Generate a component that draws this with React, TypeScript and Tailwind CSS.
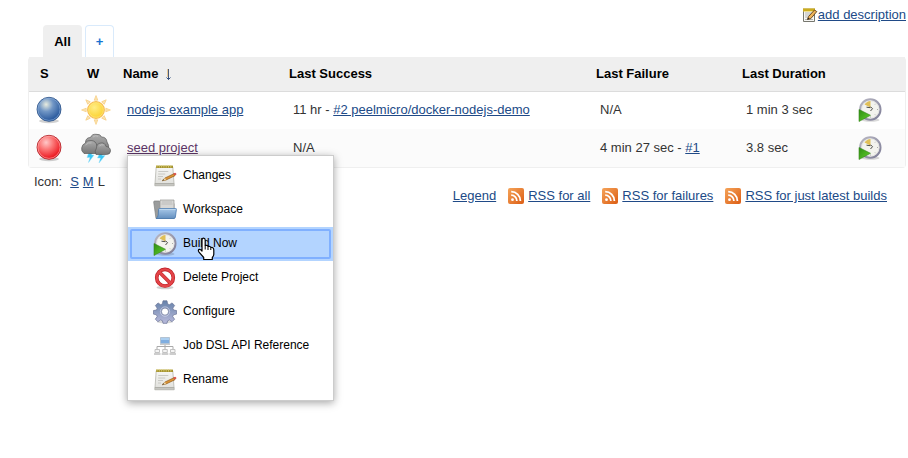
import type { ReactNode } from "react";

const link = "text-[#204a87] underline";

function Notepad() {
  return (
    <svg viewBox="0 0 24 24" className="size-6" aria-hidden="true">
      <defs>
        <linearGradient id="paper" x1="0" y1="0" x2="0" y2="1">
          <stop offset="0" stopColor="#f6f6f4" />
          <stop offset="1" stopColor="#e2e2de" />
        </linearGradient>
      </defs>
      <path d="M3.2 3h16.600l1.200 16.500H2z" fill="url(#paper)" stroke="#b5b5ae" strokeWidth=".8" />
      <path d="M1.800 19.500h19.400v2.300H1.800z" fill="#c6c6c1" stroke="#a2a29c" strokeWidth=".6" />
      <path d="M3 1.600h17v2.400H3z" fill="#a3922e" />
      <path d="M4 1v2.600M6.300 1v2.600M8.600 1v2.600M10.900 1v2.600M13.200 1v2.600M15.500 1v2.600M17.800 1v2.600" stroke="#ddd07a" strokeWidth=".8" />
      <path d="M5.300 7.500h10M5.200 10h7M5 12.500h5M5 15h3" stroke="#c4c4c0" strokeWidth=".9" />
      <path d="M9 16.800l3-2.800 9-4.300 1 2-9 4.300z" fill="#dd9436" stroke="#8f5a17" strokeWidth=".7" />
      <path d="M20.200 9.600l2-.8q1.400.6 1.200 1.800l-1.700 1z" fill="#d8524c" />
      <path d="M9 16.800l3-2.800 1 2z" fill="#f0d8a6" />
      <path d="M9 16.800l1.800-1.500.4 1z" fill="#333" />
    </svg>
  );
}

function EditNote() {
  return (
    <svg viewBox="0 0 16 16" className="size-4" aria-hidden="true">
      <path d="M1.5 2.5h11V14.5h-11z" fill="#f7f7f4" stroke="#77776f" />
      <path d="M1 1.500h12v3H1z" fill="#e7c62c" />
      <path d="M2 1v3M4 1v3M6 1v3M8 1v3M10 1v3M12 1v3" stroke="#9a7b0c" strokeWidth=".7" />
      <path d="M3 6h7M3 8h5M3 10h3M3 12.5h8" stroke="#aaa" strokeWidth=".9" />
      <path d="M5.5 12.5l1-3L12.5 3l2.3 1.600-6 7z" fill="#efb45a" stroke="#5c3a12" strokeWidth=".9" />
      <path d="M5.5 12.5l.6-1.8 1.5 1z" fill="#222" />
    </svg>
  );
}

function Clock() {
  return (
    <svg viewBox="0 0 24 24" className="size-6" aria-hidden="true">
      <defs>
        <linearGradient id="clockRim" x1="0" y1="0" x2="1" y2="1">
          <stop offset="0" stopColor="#b9b8c4" />
          <stop offset="1" stopColor="#7d7c96" />
        </linearGradient>
        <linearGradient id="play" x1="0" y1="0" x2="1" y2="1">
          <stop offset="0" stopColor="#2f8d14" />
          <stop offset="1" stopColor="#62d32c" />
        </linearGradient>
      </defs>
      <ellipse cx="12.5" cy="22" rx="9" ry="1.8" fill="#000" opacity=".15" />
      <circle cx="12.3" cy="11.5" r="10.2" fill="#f3f3ee" stroke="url(#clockRim)" strokeWidth="2" />
      <circle cx="12.3" cy="11.5" r="8.7" fill="none" stroke="#d4d4d4" strokeWidth=".5" />
      <path d="M12.5 9.500L6.5 6.500Q9 3 12.500 3z" fill="#e0bf58" />
      <path d="M8.500 9.200l4 .5M12.500 8.700l2 2-2 2.300" fill="none" stroke="#3a3a36" strokeWidth=".9" />
      <path d="M19 11.500h1M17 6.500l.7-.7M17 16.500l.7.7M12.5 18.5v1" stroke="#999" strokeWidth=".8" />
      <path d="M1 11.500v12l11.500-6.200z" fill="url(#play)" stroke="#35841c" strokeWidth=".6" />
    </svg>
  );
}

function Ball({ kind }: { kind: "blue" | "red" }) {
  const blue = kind === "blue";
  return (
    <svg viewBox="0 0 28 28" className="size-7" role="img" aria-label={blue ? "Success" : "Failed"}>
      <defs>
        <radialGradient id={`ball-${kind}`} cx=".38" cy=".3" r=".65">
          <stop offset="0" stopColor={blue ? "#e8ecdf" : "#ffc8c8"} />
          <stop offset=".45" stopColor={blue ? "#7196c5" : "#fb7777"} />
          <stop offset="1" stopColor={blue ? "#2d5c9f" : "#ed1c24"} />
        </radialGradient>
      </defs>
      <ellipse cx="14" cy="25" rx="10" ry="2.200" fill="#000" opacity=".18" />
      <circle cx="14" cy="13.300" r="12" fill={`url(#ball-${kind})`} stroke={blue ? "#284e83" : "#a71920"} strokeWidth=".8" />
      <circle cx="14" cy="13.300" r="11.100" fill="none" stroke={blue ? "#8badd9" : "#ffadad"} strokeWidth=".8" opacity=".8" />
    </svg>
  );
}

function Sun() {
  return (
    <svg viewBox="0 0 30 30" className="size-[30px]" role="img" aria-label="Sunny">
      <defs>
        <radialGradient id="sun" cx=".4" cy=".35" r=".65">
          <stop offset="0" stopColor="#ffed86" />
          <stop offset="1" stopColor="#fbd22e" />
        </radialGradient>
      </defs>
      {[0, 45, 90, 135, 180, 225, 270, 315].map((a) => (
        <path key={a} d="M13.2 5.2L15 .6l1.800 4.600z" transform={`rotate(${a} 15 15)`} fill="#fce3b0" stroke="#f6cf86" strokeWidth=".8" />
      ))}
      <circle cx="15" cy="15" r="8.3" fill="url(#sun)" stroke="#f6bd52" strokeWidth="1.2" />
      <circle cx="15" cy="15" r="7.3" fill="none" stroke="#ffe78a" strokeWidth=".6" />
    </svg>
  );
}

function Storm() {
  return (
    <svg viewBox="0 0 30 30" className="size-[30px]" role="img" aria-label="Storm">
      <defs>
        <linearGradient id="cloud" x1="0" y1="0" x2="0" y2="1">
          <stop offset="0" stopColor="#adadad" />
          <stop offset="1" stopColor="#767676" />
        </linearGradient>
      </defs>
      <path d="M8 19L6 24.500h3l-1.500 5 5.500-7.500h-2.500l2-3.500zM19 19.500L16.500 25h3L18 30l6-7.500h-3l2-3z" fill="#39c5f4" stroke="#8fdff9" strokeWidth=".5" />
      <g fill="url(#cloud)" stroke="#5a5a5a" strokeWidth=".7">
        <path d="M5 17Q4 13 4.500 9 5 4.500 9.500 4.500 11 .8 15 1.300 19.500.8 20.500 4q5 0 5.500 5 2.500 3 1.500 8L20 19z" />
        <path d="M3 20.500Q-.2 18 .8 14.500 1.500 11 4 10.500 5.500 7 10 7.500q5 .2 6 5.500 3 4 .5 7.500z" />
        <path d="M15 21.500q-2-3.500 .5-6.500 0-4.500 4.500-5 4-.5 5 3.500 4.500.5 4.500 4.500-.2 3.500-4 3.500z" />
      </g>
      <path d="M12 4q2.500-2 5-.7M4.500 12q3-3 6-2M18.500 13q2-2 4-1" fill="none" stroke="#ccc" strokeWidth=".8" opacity=".7" />
    </svg>
  );
}

function Folder() {
  return (
    <svg viewBox="0 0 24 24" className="size-6" aria-hidden="true">
      <defs>
        <linearGradient id="folder" x1="0" y1="0" x2="0" y2="1">
          <stop offset="0" stopColor="#a9c9e9" />
          <stop offset="1" stopColor="#638fbf" />
        </linearGradient>
      </defs>
      <path d="M.7 4q0-1 1-1H6l1 1h13l1 2v14.500H3z" fill="#9a9c9c" stroke="#7d7f7f" strokeWidth=".7" />
      <path d="M7 2h14v12H7z" fill="#d7d7d5" stroke="#969694" strokeWidth=".7" />
      <path d="M9 4h10M8.5 6h11" stroke="#b3b3b1" strokeWidth=".7" />
      <path d="M3 20.5q2-1 2.2-3.5l.4-5.500q.1-1 1-1h16q1 0 .8 1L22.400 19q-.2 1.500-1.500 1.500z" fill="url(#folder)" stroke="#4779af" strokeWidth=".8" />
      <path d="M6.5 11.400h16" stroke="#d0e5f7" strokeWidth=".7" />
    </svg>
  );
}

function Forbidden() {
  return (
    <svg viewBox="0 0 24 24" className="size-6" aria-hidden="true">
      <ellipse cx="12" cy="21.5" rx="8.5" ry="1.7" fill="#000" opacity=".18" />
      <circle cx="12" cy="11.7" r="8.3" fill="#fff" stroke="#b91e24" strokeWidth="3.6" />
      <path d="M6.500 6.200l11 11" stroke="#b91e24" strokeWidth="3.6" />
      <circle cx="12" cy="11.7" r="8.3" fill="none" stroke="#e44448" strokeWidth="2.4" />
      <path d="M6.500 6.200l11 11" stroke="#e44448" strokeWidth="2.4" />
    </svg>
  );
}

function Gear() {
  return (
    <svg viewBox="0 0 24 24" className="size-6" aria-hidden="true">
      <defs>
        <linearGradient id="gear" x1="0" y1="0" x2="0" y2="1">
          <stop offset="0" stopColor="#6682aa" />
          <stop offset="1" stopColor="#b9badb" />
        </linearGradient>
      </defs>
      <ellipse cx="12" cy="22" rx="8" ry="1.5" fill="#000" opacity=".15" />
      <path
        d="M10 .8h4l.6 3.100 1.800.8 2.700-1.800 2.500 2.600-1.800 2.700.8 1.800 3 .6v3.500l-3.100.7-.8 1.800 1.900 2.600-2.500 2.500-2.700-1.700-1.800.8-.6 2.500h-4l-.6-2.600-1.800-.7-2.700 1.700-2.600-2.500 1.900-2.700-.8-1.700-3-.7v-3.500l3.100-.6.7-1.800-1.800-2.700L5 2.900l2.700 1.800 1.700-.8zM12 8a3.600 3.600 0 1 0 0 7.200A3.600 3.600 0 0 0 12 8z"
        fill="url(#gear)"
        fillRule="evenodd"
        stroke="#687397"
        strokeWidth=".7"
      />
      <circle cx="12" cy="11.600" r="4.700" fill="none" stroke="#d2d5ea" strokeWidth=".7" />
    </svg>
  );
}

function Tree() {
  return (
    <svg viewBox="0 0 24 24" className="size-6" aria-hidden="true">
      <path d="M12 10v6M4 16v-3.500h16V16" fill="none" stroke="#aaa" />
      <path d="M7.500 3.500h9v6h-9z" fill="#80aee0" stroke="#b3c3d3" />
      <path d="M8 4h8v2H8z" fill="#abcff1" />
      <path d="M7 10.500h10" stroke="#cacaca" />
      <path d="M2 15.500h4.500v3H2zM9.700 15.500h4.600v3H9.700zM17.500 15.500H22v3h-4.500z" fill="#f4f4f4" stroke="#b5b5b5" strokeWidth=".8" />
      <path d="M1 20h6.500M8.700 20h6.600M16.500 20H23" stroke="#bdbdbd" strokeWidth="1.300" />
    </svg>
  );
}

function Rss() {
  return (
    <svg viewBox="0 0 16 16" className="size-4" aria-hidden="true">
      <defs>
        <linearGradient id="rss" x1="0" y1="0" x2="1" y2="1">
          <stop offset="0" stopColor="#f5a45a" />
          <stop offset="1" stopColor="#dc5d14" />
        </linearGradient>
      </defs>
      <rect width="16" height="16" rx="2" fill="url(#rss)" />
      <circle cx="4.500" cy="11.700" r="1.400" fill="#fff" />
      <path d="M3.200 7.200a5.700 5.700 0 0 1 5.700 5.700M3.200 3.700a9.200 9.200 0 0 1 9.200 9.200" fill="none" stroke="#fff" strokeWidth="1.800" />
    </svg>
  );
}

function SortArrow() {
  return (
    <svg viewBox="0 0 8 12" className="inline-block h-3 w-2" role="img" aria-label="Sorted descending">
      <path d="M4.500 1v10.500M2.500 9.500l2 2 2-2" fill="none" stroke="#35507f" strokeWidth="1" />
      <path d="M3.700 1v8" stroke="#e0a955" strokeWidth=".7" />
    </svg>
  );
}

function Pointer() {
  return (
    <svg viewBox="0 0 18 24" className="pointer-events-none absolute top-2.5 left-[69px] h-6 w-[18px]" aria-hidden="true">
      <path
        d="M5 14V3.200Q5 1.200 6.600 1.200T8.200 3.200V8.500Q11 8 11 9.500 13.500 9 13.800 10.500 16.700 10 16.800 13v4q0 2-1.500 3.500V22.500H6.700V20.500L1.800 14.800Q.8 13 2.200 12.400 3.500 12.200 5 14z"
        fill="#fff"
        stroke="#000"
        strokeWidth="1.200"
        strokeLinejoin="round"
      />
      <path d="M8.200 8.500v4M11 9.500v3.500M13.800 10.500V13" stroke="#000" />
    </svg>
  );
}

const menu: { label: string; icon: ReactNode }[] = [
  { label: "Changes", icon: <Notepad /> },
  { label: "Workspace", icon: <Folder /> },
  { label: "Build Now", icon: <Clock /> },
  { label: "Delete Project", icon: <Forbidden /> },
  { label: "Configure", icon: <Gear /> },
  { label: "Job DSL API Reference", icon: <Tree /> },
  { label: "Rename", icon: <Notepad /> },
];

function ContextMenu() {
  return (
    <ul className="absolute top-[15px] left-0 z-10 w-[207px] border border-[#ccc] bg-white py-[3px] text-xs text-black shadow-[0_2px_8px_rgba(0,0,0,0.35)]">
      {menu.map(({ label, icon }) => {
        const active = label === "Build Now";
        return (
          <li key={label} className={active ? "relative bg-[#b3d4ff] p-0.5" : "p-0.5"}>
            <button
              type="button"
              className={`flex h-[30px] w-full items-center gap-1.5 border-2 pl-[21px] text-left whitespace-nowrap ${active ? "rounded-xs border-[#80b0ff]" : "border-transparent"}`}
            >
              {icon}
              <span className="pb-0.5">{label}</span>
            </button>
            {active && <Pointer />}
          </li>
        );
      })}
    </ul>
  );
}

function BuildButton() {
  return (
    <button type="button" aria-label="Schedule a build" className="block">
      <Clock />
    </button>
  );
}

export default function App() {
  return (
    <main className="min-h-screen pr-0.5 pl-7 font-['Liberation_Sans',Arial,sans-serif] text-[13px] leading-4 text-[#333]">
      <div className="flex h-[25px] items-end justify-end pb-0.5">
        <a href="#description" className={`flex items-center ${link}`}>
          <EditNote />
          add description
        </a>
      </div>
      <nav className="flex gap-[3px] pl-[15px] font-bold">
        <a href="#all" className="flex h-8 w-[39px] items-center justify-center rounded-t bg-[#efefef] pt-0.5 text-black">
          All
        </a>
        <a href="#new" aria-label="New view" className="flex h-8 w-[29px] items-center justify-center rounded-t border border-b-0 border-[#d9eafb] text-[#1673d1]">
          +
        </a>
      </nav>
      <div className="rounded border border-t-0 border-[#efefef]">
        <table className="w-full table-fixed border-collapse text-left">
          <colgroup>
            <col className="w-[43px]" />
            <col className="w-[47px]" />
            <col className="w-[166px]" />
            <col className="w-[307px]" />
            <col className="w-[146px]" />
            <col className="w-[117px]" />
            <col />
          </colgroup>
          <thead>
            <tr className="h-[34px] border-b border-[#dcdcdc] bg-[#efefef] text-black">
              <th className="pl-[11px]">S</th>
              <th className="pl-[15px]">W</th>
              <th className="pl-1">
                <div className="flex items-center gap-1.5">
                  Name
                  <SortArrow />
                </div>
              </th>
              <th className="pl-1">Last Success</th>
              <th className="pl-1">Last Failure</th>
              <th className="pl-1">Last Duration</th>
              <th aria-label="Build" />
            </tr>
          </thead>
          <tbody>
            <tr className="h-[38px]">
              <td className="pl-1.5"><Ball kind="blue" /></td>
              <td className="pl-[9px]"><Sun /></td>
              <td className="pl-2"><a href="#nodejs" className={link}>nodejs example app</a></td>
              <td className="pl-2">11 hr - <a href="#build-2" className={link}>#2 peelmicro/docker-nodejs-demo</a></td>
              <td className="pl-2">N/A</td>
              <td className="pl-2">1 min 3 sec</td>
              <td className="pl-[3px]"><BuildButton /></td>
            </tr>
            <tr className="h-[38px] bg-[#fbfbfb]">
              <td className="pl-1.5"><Ball kind="red" /></td>
              <td className="pl-[9px]"><Storm /></td>
              <td className="pl-2">
                <div className="relative">
                  <a href="#seed" className="text-[#5c3566] underline">seed project</a>
                  <ContextMenu />
                </div>
              </td>
              <td className="pl-2">N/A</td>
              <td className="pl-2">4 min 27 sec - <a href="#build-1" className={link}>#1</a></td>
              <td className="pl-2">3.8 sec</td>
              <td className="pl-[3px]"><BuildButton /></td>
            </tr>
          </tbody>
        </table>
      </div>
      <footer className="flex justify-between pt-1.5 pr-[19px] pl-1.5">
        <div className="flex gap-1">
          <span className="mr-1">Icon:</span>
          <a href="#small" className={link}>S</a>
          <a href="#medium" className={link}>M</a>
          <span>L</span>
        </div>
        <div className="flex gap-3 pt-3.5">
          <a href="#legend" className={link}>Legend</a>
          {["RSS for all", "RSS for failures", "RSS for just latest builds"].map((label) => (
            <a key={label} href="#rss" className={`flex gap-1 ${link}`}>
              <Rss />
              {label}
            </a>
          ))}
        </div>
      </footer>
    </main>
  );
}
